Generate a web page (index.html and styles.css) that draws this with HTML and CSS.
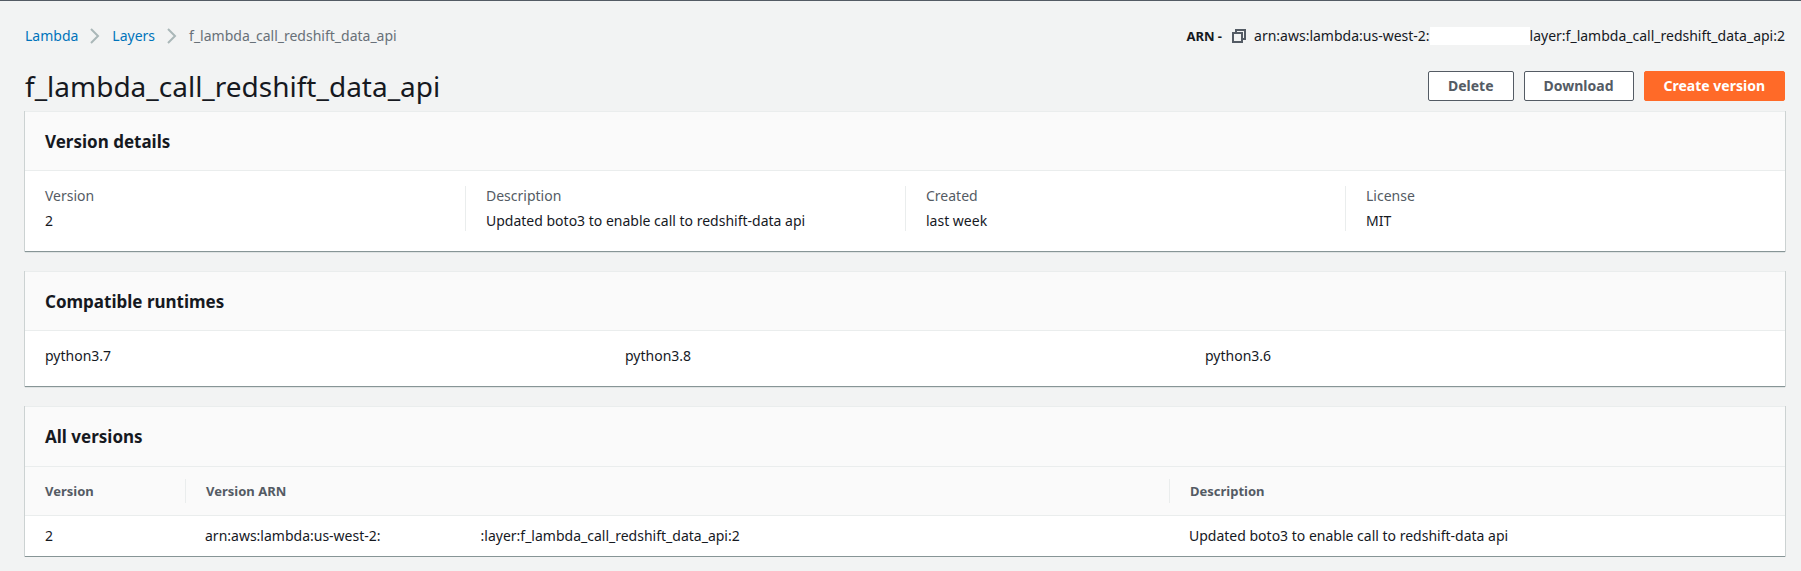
FILE: index.html
```html
<!DOCTYPE html>
<html lang="en">
<head>
<meta charset="utf-8">
<title>f_lambda_call_redshift_data_api</title>
<link rel="stylesheet" href="styles.css">
</head>
<body>
<main class="page">
  <div class="topbar">
    <nav class="breadcrumbs" aria-label="Breadcrumb">
      <a href="#">Lambda</a>
      <svg class="chevron" viewBox="0 0 10 16" aria-hidden="true"><path d="M1 1l7 7-7 7"/></svg>
      <a href="#">Layers</a>
      <svg class="chevron" viewBox="0 0 10 16" aria-hidden="true"><path d="M1 1l7 7-7 7"/></svg>
      <span class="current">f_lambda_call_redshift_data_api</span>
    </nav>
    <div class="arn">
      <span class="arn-label">ARN -</span>
      <button class="copy" type="button" aria-label="Copy ARN">
        <svg viewBox="0 0 14 14" aria-hidden="true"><path d="M1 4h9v9H1zM4 4V1h9v9h-3"/></svg>
      </button>
      <span class="arn-value">arn:aws:lambda:us-west-2:<span class="mask"></span>layer:f_lambda_call_redshift_data_api:2</span>
    </div>
  </div>

  <header class="heading">
    <h1>f_lambda_call_redshift_data_api</h1>
    <div class="actions">
      <button class="btn" type="button">Delete</button>
      <button class="btn" type="button">Download</button>
      <button class="btn primary" type="button">Create version</button>
    </div>
  </header>

  <section class="panel">
    <h2>Version details</h2>
    <dl class="details">
      <div><dt>Version</dt><dd>2</dd></div>
      <div><dt>Description</dt><dd>Updated boto3 to enable call to redshift-data api</dd></div>
      <div><dt>Created</dt><dd>last week</dd></div>
      <div><dt>License</dt><dd>MIT</dd></div>
    </dl>
  </section>

  <section class="panel">
    <h2>Compatible runtimes</h2>
    <ul class="runtimes">
      <li>python3.7</li>
      <li>python3.8</li>
      <li>python3.6</li>
    </ul>
  </section>

  <section class="panel table-panel">
    <h2>All versions</h2>
    <table class="versions">
      <colgroup><col class="col-version"><col><col class="col-description"></colgroup>
      <thead>
        <tr><th scope="col"><span>Version</span></th><th scope="col"><span>Version ARN</span></th><th scope="col"><span>Description</span></th></tr>
      </thead>
      <tbody>
        <tr><td>2</td><td>arn:aws:lambda:us-west-2:<span class="mask"></span>:layer:f_lambda_call_redshift_data_api:2</td><td>Updated boto3 to enable call to redshift-data api</td></tr>
      </tbody>
    </table>
  </section>
</main>
</body>
</html>
```
FILE: styles.css
```css
* {
  box-sizing: border-box;
}

body {
  margin: 0;
  background: #f2f3f3;
  color: #16191f;
  font-family: "Noto Sans", "Open Sans", sans-serif;
  font-size: 14px;
  line-height: 20px;
}

h1, h2, dl, dd, ul {
  margin: 0;
  padding: 0;
}

.page {
  border-top: 1px solid #545b64;
  padding: 25px 16px 0 25px;
}

.topbar,
.heading,
.breadcrumbs,
.arn,
.actions {
  display: flex;
  align-items: center;
}

.topbar,
.heading {
  justify-content: space-between;
}

.breadcrumbs {
  gap: 12px;
}

.breadcrumbs a {
  color: #0073bb;
  text-decoration: none;
}

.current {
  color: #687078;
}

.chevron {
  width: 10px;
  height: 16px;
  fill: none;
  stroke: #aab7b8;
  stroke-width: 2;
}

.arn-label {
  margin-right: 10px;
  font-size: 13px;
  font-weight: 700;
}

.copy {
  display: flex;
  margin-right: 8px;
  padding: 0;
  border: 0;
  background: none;
}

.copy svg {
  width: 14px;
  height: 14px;
  fill: none;
  stroke: #545b64;
  stroke-width: 2;
}

.mask {
  display: inline-block;
  width: 100px;
  height: 18px;
  background: #fff;
  vertical-align: text-bottom;
}

.heading {
  margin-top: 22px;
  margin-bottom: 7px;
}

h1 {
  font-size: 28px;
  line-height: 36px;
  font-weight: 400;
}

.actions {
  gap: 10px;
}

.btn {
  height: 30px;
  padding: 0 19px;
  border: 1px solid #545b64;
  border-radius: 2px;
  background: #fff;
  color: #545b64;
  font: inherit;
  font-weight: 700;
}

.primary {
  border-color: #ff6a28;
  background: #ff6a28;
  color: #fff;
}

.panel {
  margin-bottom: 19px;
  border-top: 1px solid #eaeded;
  border-bottom: 1px solid #879596;
  background: #fff;
  box-shadow: 1px 0 0 #ccd2d2, -1px 0 0 #ccd2d2, 0 1px 0 #dfe3e3;
}

.panel:last-child {
  margin-bottom: 0;
}

h2 {
  padding: 19px 20px 17px;
  border-bottom: 1px solid #eaeded;
  background: #fafafa;
  font-size: 17px;
  line-height: 22px;
  font-weight: 700;
}

.table-panel h2 {
  padding-bottom: 18px;
}

.details {
  display: grid;
  grid-template-columns: repeat(4, 1fr);
  padding: 15px 0 20px;
}

.details div {
  padding: 0 20px;
}

.details div + div {
  border-left: 1px solid #eaeded;
}

dt {
  color: #545b64;
}

dd {
  margin-top: 5px;
}

.runtimes {
  display: grid;
  grid-template-columns: repeat(3, 1fr);
  gap: 20px;
  padding: 15px 20px 20px;
  list-style: none;
}

.versions {
  width: 100%;
  border-collapse: collapse;
  table-layout: fixed;
  text-align: left;
}

.col-version {
  width: 160px;
}

.col-description {
  width: 35%;
}

.versions th {
  padding: 12px 0;
  border-bottom: 1px solid #eaeded;
  background: #fafafa;
  color: #545b64;
  font-size: 13px;
}

.versions th span {
  display: block;
  padding: 2px 20px;
}

.versions th + th span {
  border-left: 1px solid #eaeded;
}

.versions td {
  padding: 10px 20px;
}
```
